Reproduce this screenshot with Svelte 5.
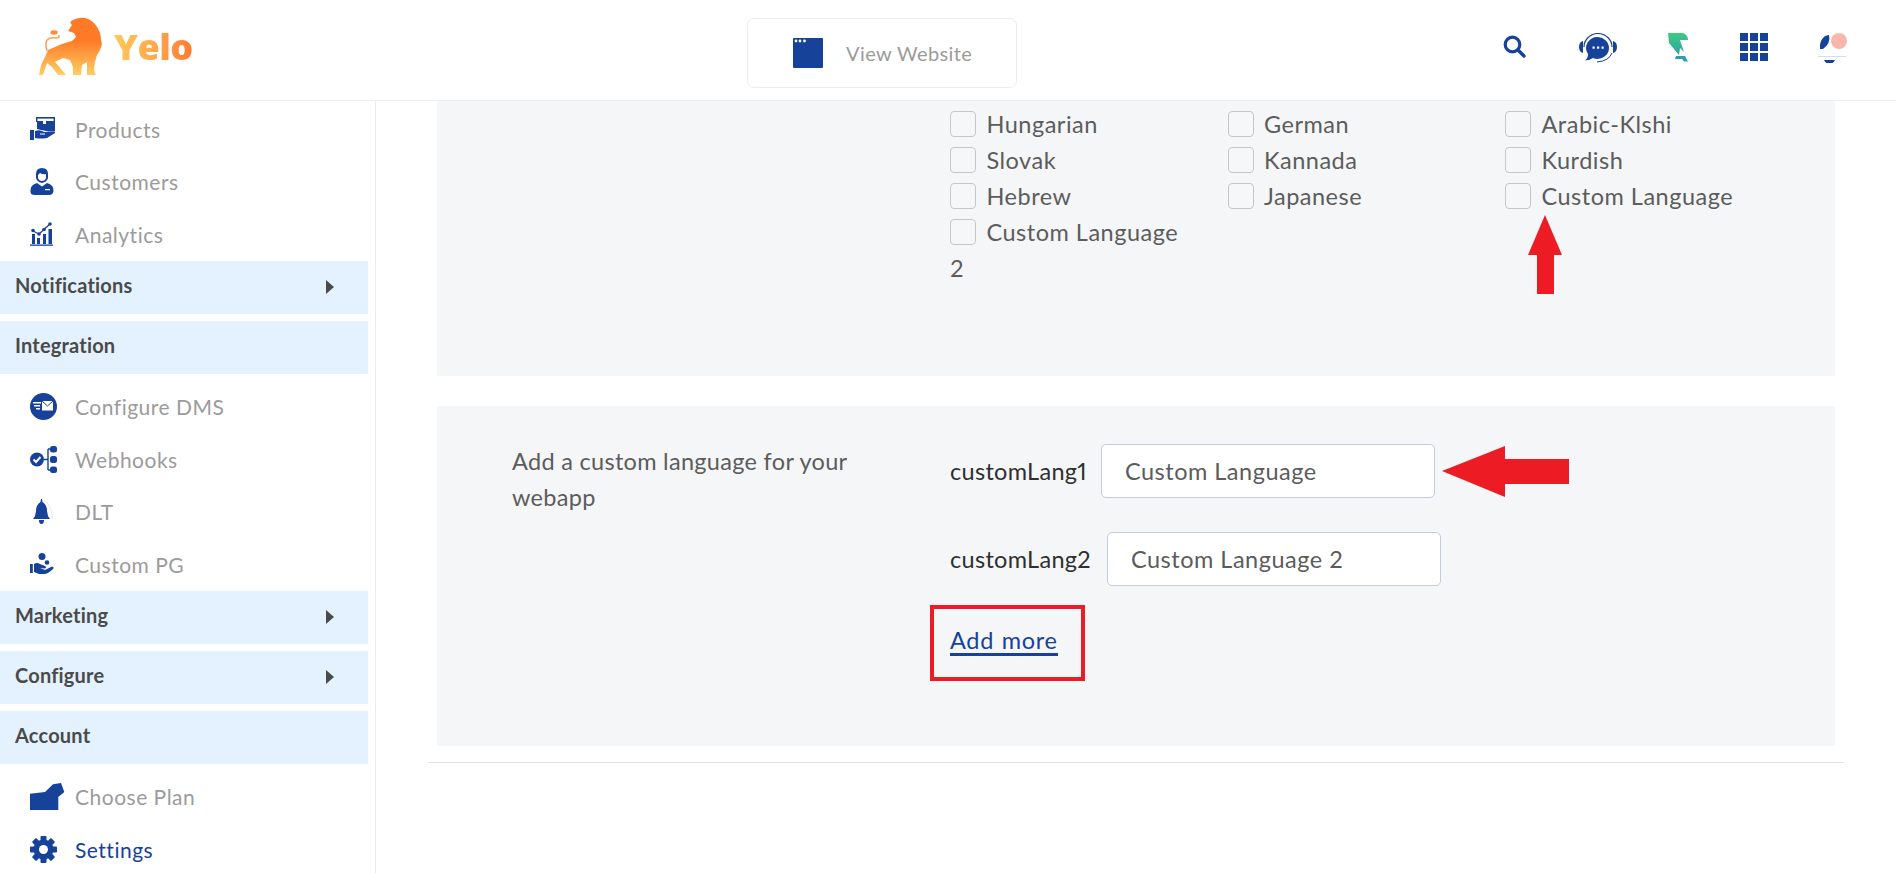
<script>
  const col1 = ['Hungarian', 'Slovak', 'Hebrew', 'Custom Language 2'];
  const col2 = ['German', 'Kannada', 'Japanese'];
  const col3 = ['Arabic-Klshi', 'Kurdish', 'Custom Language'];
  const columns = [col1, col2, col3];
</script>

<div class="page">
  <header class="topbar">
    <div class="brand">
      <svg class="lion" width="66" height="60" viewBox="37 16 66 60" aria-hidden="true">
        <defs>
          <linearGradient id="lg" x1="0" y1="0" x2="0" y2="1">
            <stop offset="0.4" stop-color="#ff7a26"/>
            <stop offset="1" stop-color="#ffcf66"/>
          </linearGradient>
        </defs>
        <path fill="url(#lg)" d="M68 31 L72 25 L70 22 Q77 17 85 18 Q93 20 97 27 Q101 33 101 40 L102 44 L100 50 L97 55 L95 62 L94 70 L96 75 L87 75 L87 62 L82 65 L81 75 L73 75 L73 67 L70 60 L63 58 L55 62 L62 70 L66 75 L58 75 L52 67 L47 63 L43 75 L39 75 L41 65 L46 55 L48 50 Q55 47 62 44 Q68 42 72 41 L76 37 L74 33 Z"/>
        <path fill="none" stroke="#ffa050" stroke-width="1.600" d="M47 51 Q45 44 47 40 Q50 37 56 38 Q60 38 59 35"/>
        <ellipse cx="54" cy="32.500" rx="3.600" ry="2.200" fill="#ff8a3c"/>
      </svg>
      <span class="wordmark">Yelo</span>
    </div>
    <a class="view-site" href="#top">
      <svg width="30" height="30" viewBox="0 0 30 30" aria-hidden="true">
        <rect width="30" height="30" rx="1" fill="#16429a"/>
        <circle cx="3" cy="3" r="1.400" fill="#fff"/><circle cx="7" cy="3" r="1.400" fill="#fff"/><circle cx="11.500" cy="3" r="1.400" fill="#fff"/>
      </svg>
      <span>View Website</span>
    </a>
    <div class="tools">
      <svg class="t-search" width="23" height="23" viewBox="0 0 23 23" aria-hidden="true">
        <circle cx="9.500" cy="9.500" r="7.300" fill="none" stroke="#16429a" stroke-width="3.200"/>
        <path d="M15 15 L21 21" stroke="#16429a" stroke-width="3.400" stroke-linecap="round"/>
      </svg>
      <svg class="t-chat" width="38" height="30" viewBox="0 0 38 30" aria-hidden="true">
        <path d="M5 14 A14 13.500 0 0 1 33 14" fill="none" stroke="#16429a" stroke-width="1.200"/>
        <path d="M4 8 L4 20 Q0 19 0 14 Q0 9 4 8 Z M34 8 L34 20 Q38 19 38 14 Q38 9 34 8 Z" fill="#16429a"/>
        <path d="M19 4 A11.500 11 0 0 1 30 15 A11.500 11 0 0 1 14 25 Q11 27 6 27.500 Q9 25 9 21 A11.500 11 0 0 1 19 4 Z" fill="#16429a"/>
        <path d="M33 20 Q30 28 18 29" fill="none" stroke="#16429a" stroke-width="1"/>
        <rect x="13.500" y="13.500" width="2.200" height="2.200" fill="#fff"/><rect x="18" y="13.500" width="2.200" height="2.200" fill="#fff"/><rect x="22.500" y="13.500" width="2.200" height="2.200" fill="#fff"/>
      </svg>
      <svg class="t-leaf" width="20" height="29" viewBox="0 0 20 29" aria-hidden="true">
        <defs>
          <linearGradient id="lf" x1="0" y1="0" x2="0" y2="1">
            <stop offset="0" stop-color="#3ecb82"/><stop offset="1" stop-color="#2aa3a0"/>
          </linearGradient>
        </defs>
        <path fill="url(#lf)" d="M0 0 H15 Q20 2 20 7 H12 L16 19 L12 15 L11 22 L1 10 Z"/>
        <path fill="#2f9fb0" d="M8 23 H17 L20 28.500 H16 L14 26 H7 Z"/>
      </svg>
      <svg class="t-grid" width="28" height="28" viewBox="0 0 28 28" fill="#16429a" aria-hidden="true">
        <rect width="8" height="8"/><rect x="10" width="8" height="8"/><rect x="20" width="8" height="8"/>
        <rect y="10" width="8" height="8"/><rect x="10" y="10" width="8" height="8"/><rect x="20" y="10" width="8" height="8"/>
        <rect y="20" width="8" height="8"/><rect x="10" y="20" width="8" height="8"/><rect x="20" y="20" width="8" height="8"/>
      </svg>
      <svg class="t-bell" width="30" height="30" viewBox="0 0 30 30" aria-hidden="true">
        <path d="M2 23 L5 9 Q7 3 13 1 L21 5 L26 23 Z" fill="#fff"/>
        <path d="M0 23.500 H28" stroke="#d5dcf0" stroke-width="1"/>
        <path d="M2 16 Q1 8 7 3 L11 2 Q13 10 5 16 Z" fill="#16429a"/>
        <path d="M6 27 H17 Q15 31 11.500 31 Q8 31 6 27 Z" fill="#16429a"/>
        <circle cx="21" cy="8" r="8" fill="#f7b7ab"/>
      </svg>
    </div>
  </header>

  <div class="body">
    <nav class="sidebar">
      <div class="item">
        <svg width="26" height="24" viewBox="0 0 26 24" fill="#16429a" aria-hidden="true">
          <rect x="6" y="0" width="19" height="1.600"/><rect x="6" y="0" width="1.400" height="5"/><rect x="23.600" y="0" width="1.400" height="5"/>
          <path d="M7 4 H13 V7 H16 V4 H25 V14 Q20 15 16 14 L7 12 Z"/>
          <rect x="0" y="13" width="4" height="10"/>
          <path d="M5 14 Q10 12 14 15 H18 L25 14.500 L25 16 L17 21 Q11 22 5 21 Z M10 16.500 H15 V17.500 H10 Z" fill-rule="evenodd"/>
        </svg>
        <span>Products</span>
      </div>
      <div class="item">
        <svg width="24" height="27" viewBox="0 0 24 27" fill="#16429a" aria-hidden="true">
          <path d="M12 0 Q18 0 18 6 V10 Q17 14 12 15 Q7 14 6 10 V6 Q6 0 12 0 Z M8 7 V10 Q9 13 12 13 Q15 13 16 10 V6 Q13 7 10 5 Z" fill-rule="evenodd"/>
          <path d="M7 15 L12 18.500 L17 15 Q24 17 23.500 23 Q23 27 19 27 H5 Q0 27 0.500 23 Q0 17 7 15 Z"/>
          <rect x="15" y="21" width="5" height="1.200" fill="#fff"/>
        </svg>
        <span>Customers</span>
      </div>
      <div class="item">
        <svg width="24" height="24" viewBox="0 0 24 24" fill="#16429a" aria-hidden="true">
          <rect x="0" y="22.500" width="23" height="1.300"/>
          <rect x="2" y="12" width="3" height="10"/><rect x="7" y="16" width="3" height="6"/><rect x="13" y="12" width="3" height="10"/><rect x="18.500" y="7" width="3.500" height="15"/>
          <path d="M3 9 L9 12 L20 2" fill="none" stroke="#16429a" stroke-width="1.200"/>
          <circle cx="3" cy="8.500" r="1.800"/><circle cx="9" cy="12" r="1.800"/><circle cx="14" cy="7.500" r="1.800"/><circle cx="20" cy="2" r="1.800"/>
        </svg>
        <span>Analytics</span>
      </div>

      <div class="band"><span>Notifications</span><i class="caret"></i></div>
      <div class="band"><span>Integration</span></div>

      <div class="item">
        <svg width="27" height="27" viewBox="0 0 27 27" aria-hidden="true">
          <circle cx="13.500" cy="13.500" r="13.500" fill="#16429a"/>
          <rect x="12" y="8" width="11" height="9.500" fill="#fff"/>
          <path d="M12 8 L17.500 13 L23 8" fill="none" stroke="#16429a" stroke-width="1"/>
          <rect x="3" y="9" width="8" height="1.500" fill="#fff"/><rect x="4" y="12" width="6" height="1.500" fill="#fff"/><rect x="6" y="15" width="4" height="1.500" fill="#fff"/>
        </svg>
        <span>Configure DMS</span>
      </div>
      <div class="item">
        <svg width="27" height="27" viewBox="0 0 27 27" fill="#16429a" aria-hidden="true">
          <circle cx="7" cy="13.500" r="7"/>
          <path d="M3.500 13.500 L6 16 L10.500 11" fill="none" stroke="#fff" stroke-width="2"/>
          <path d="M14 13.500 H18 M18 3 V24 M18 3 H22 M18 24 H22" fill="none" stroke="#16429a" stroke-width="1.400"/>
          <rect x="20" y="0" width="7" height="6.500" rx="2.500"/><rect x="20" y="10" width="7" height="7" rx="2.500"/><rect x="20" y="20.500" width="7" height="6.500" rx="2.500"/>
        </svg>
        <span>Webhooks</span>
      </div>
      <div class="item">
        <svg class="nudge" width="22" height="26" viewBox="0 0 22 26" fill="#16429a" aria-hidden="true">
          <path d="M9 0 H10 L10.500 3 Q15 6 15 12 L16 17 L18 20 H1 L3 17 L4 12 Q4 6 8.500 3 Z"/>
          <path d="M7 21 H12 Q12 25 9.500 25 Q7 25 7 21 Z"/>
          <path d="M12 1 Q18 4 20 16 L21 20" fill="none" stroke="#d6def0" stroke-width="0.700"/>
        </svg>
        <span>DLT</span>
      </div>
      <div class="item">
        <svg width="24" height="22" viewBox="0 0 24 22" fill="#16429a" aria-hidden="true">
          <circle cx="12" cy="3.500" r="3.500"/><circle cx="17" cy="9.500" r="2.300"/>
          <rect x="0" y="11" width="2.800" height="9"/>
          <path d="M4 11 Q7 9 10 11 L15 13 Q17 14 15 15.500 L10 15 L15 17 L22 13.500 Q24.500 14 23 16 Q18 21 14 21 H9 L4 19 Z"/>
        </svg>
        <span>Custom PG</span>
      </div>

      <div class="band"><span>Marketing</span><i class="caret"></i></div>
      <div class="band"><span>Configure</span><i class="caret"></i></div>
      <div class="band"><span>Account</span></div>

      <div class="item">
        <svg width="35" height="27" viewBox="0 0 35 27" fill="#16429a" aria-hidden="true">
          <path d="M0 10.700 L15 9 L23 1.300 L31 0 L34.300 9 L28.300 14 V27 H0 Z"/>
        </svg>
        <span>Choose Plan</span>
      </div>
      <div class="item active">
        <svg width="27" height="27" viewBox="-13.500 -13.500 27 27" aria-hidden="true">
          <g fill="#16429a">
            <circle r="10"/>
            {#each [0, 45, 90, 135, 180, 225, 270, 315] as a}
              <rect x="-3" y="-13.500" width="6" height="5" rx="1" transform="rotate({a})"/>
            {/each}
          </g>
          <circle r="4.500" fill="#fff"/>
        </svg>
        <span>Settings</span>
      </div>
    </nav>

    <main class="content">
      <section class="panel languages">
        <div class="lang-grid">
          {#each columns as column}
            <div class="lang-col">
              {#each column as name}
                <label class="option"><span class="box"></span>{name}</label>
              {/each}
            </div>
          {/each}
        </div>
        <svg class="arrow-up" width="34" height="79" viewBox="0 0 34 79" aria-hidden="true">
          <path d="M17 0 L34 40 H26 V79 H9 V40 H0 Z" fill="#ed1c24"/>
        </svg>
      </section>

      <section class="panel custom">
        <p class="hint">Add a custom language for your webapp</p>
        <div class="fields">
          <div class="field"><span class="key">customLang1</span><input readonly value="Custom Language" /></div>
          <div class="field second"><span class="key">customLang2</span><input readonly value="Custom Language 2" /></div>
          <a class="add" href="#top">Add more</a>
        </div>
        <svg class="arrow-left" width="127" height="51" viewBox="0 0 127 51" aria-hidden="true">
          <path d="M0 25 L63 0 V13 H127 V38 H63 V51 Z" fill="#ed1c24"/>
        </svg>
        <div class="red-box"></div>
      </section>
      <hr class="rule" />
    </main>
  </div>
</div>

<style>
  :global(body) {
    margin: 0;
    background: #fff;
    font-family: "Lato", "Open Sans", sans-serif;
  }
  .page {
    width: 1896px;
    height: 873px;
    overflow: hidden;
    display: flex;
    flex-direction: column;
  }
  .topbar {
    height: 100px;
    flex: none;
    border-bottom: 1px solid #e9edf5;
    display: grid;
    grid-template-columns: 747px 270px 1fr;
    align-items: center;
  }
  .brand {
    display: flex;
    align-items: center;
    padding-left: 37px;
    gap: 11px;
    margin-top: -8px;
  }
  .wordmark {
    font: 800 36px/1 "Open Sans", sans-serif;
    background: linear-gradient(90deg, #ffc75c 0%, #ffa94c 50%, #ff7a2c 100%);
    -webkit-background-clip: text;
    background-clip: text;
    color: transparent;
    margin-top: 2px;
    letter-spacing: -0.5px;
  }
  .view-site {
    height: 70px;
    box-sizing: border-box;
    margin-top: 6px;
    border: 1px solid #ececec;
    border-radius: 7px;
    display: flex;
    align-items: center;
    padding-left: 45px;
    gap: 23px;
    color: #9b9b9b;
    font-size: 20px;
    letter-spacing: 0.4px;
    text-decoration: none;
  }
  .tools {
    display: flex;
    align-items: flex-start;
    height: 100px;
    box-sizing: border-box;
    padding: 33px 0 0 486px;
  }
  .t-search { margin-top: 2px; }
  .t-chat { margin-left: 53px; }
  .t-leaf { margin-left: 51px; }
  .t-grid { margin-left: 52px; }
  .t-bell { margin-left: 50px; }

  .body {
    flex: 1;
    min-height: 0;
    display: flex;
  }
  .sidebar {
    width: 375px;
    flex: none;
    border-right: 1px solid #e9edf5;
    padding-top: 2px;
    overflow: hidden;
  }
  .item {
    height: 52.500px;
    display: grid;
    grid-template-columns: 45px 1fr;
    align-items: center;
    padding-left: 30px;
    color: #9b9b9b;
    font-size: 21px;
    letter-spacing: 0.5px;
  }
  .item svg { justify-self: start; }
  .item .nudge { margin-left: 2px; }
  .item.active { color: #16429a; }
  .band {
    width: 368px;
    height: 53px;
    margin-bottom: 7px;
    background: #e3f2fe;
    display: flex;
    align-items: center;
    justify-content: space-between;
    padding: 0 34px 4px 15px;
    box-sizing: border-box;
    color: #4a4a4a;
    font-size: 20px;
    font-weight: 700;
    letter-spacing: 0.2px;
  }
  .caret {
    width: 0;
    height: 0;
    margin-top: 4px;
    border-left: 8px solid #4a4a4a;
    border-top: 7.500px solid transparent;
    border-bottom: 7.500px solid transparent;
  }

  .content {
    flex: 1;
    min-width: 0;
    padding: 0 52px;
    overflow: hidden;
  }
  .panel {
    position: relative;
    margin: 0 9px;
    background: #f4f6f8;
    color: #5c5c5c;
    font-size: 23.500px;
  }
  .languages {
    height: 275px;
    box-sizing: border-box;
    padding: 4.500px 0 0 513px;
  }
  .lang-grid {
    display: flex;
    align-items: flex-start;
  }
  .lang-col {
    width: 277.500px;
    flex: none;
  }
  .option {
    display: block;
    width: 240px;
    line-height: 36px;
    letter-spacing: 0.5px;
  }
  .box {
    display: inline-block;
    width: 26px;
    height: 26px;
    box-sizing: border-box;
    border: 1px solid #c6c6c6;
    border-radius: 4px;
    background: #f6f7f9;
    margin-right: 10.500px;
    vertical-align: -4.500px;
  }
  .arrow-up {
    position: absolute;
    left: 1091px;
    top: 114px;
  }
  .custom {
    margin-top: 30px;
    height: 340px;
    box-sizing: border-box;
    padding: 37px 0 0 75px;
    display: flex;
  }
  .hint {
    width: 360px;
    margin: 0 78px 0 0;
    line-height: 36px;
    letter-spacing: 0.3px;
  }
  .fields { padding-top: 1px; }
  .field {
    display: flex;
    align-items: center;
    gap: 14px;
    margin-bottom: 34px;
  }
  .field.second { gap: 16px; }
  .key {
    color: #2f2f2f;
    letter-spacing: 0.3px;
    font-variant-numeric: proportional-nums;
  }
  input {
    width: 334px;
    height: 54px;
    box-sizing: border-box;
    background: #fff;
    border: 1px solid #c3cbdf;
    border-radius: 5px;
    padding: 0 23px;
    font: inherit;
    color: #5c5c5c;
    letter-spacing: 0.5px;
    outline: none;
  }
  .add {
    display: block;
    width: fit-content;
    margin-top: 41.500px;
    color: #16429a;
    text-decoration: none;
    border-bottom: 3px solid #16429a;
    letter-spacing: 0.7px;
    word-spacing: 1px;
    line-height: 25px;
  }
  .arrow-left {
    position: absolute;
    left: 1005px;
    top: 40px;
  }
  .red-box {
    position: absolute;
    left: 493px;
    top: 199px;
    width: 155px;
    height: 76px;
    box-sizing: border-box;
    border: 4px solid #ed1c24;
  }
  .rule {
    margin: 16px 0 0;
    border: 0;
    border-top: 1px solid #e6e6e6;
  }
</style>
